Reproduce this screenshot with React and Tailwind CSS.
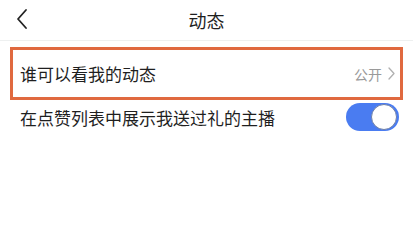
import React from 'react';

export default function App() {
  const font = { fontFamily: '"Noto Sans CJK SC", "Noto Sans", sans-serif' };
  return (
    <div className="w-[413px] h-[243px] bg-white overflow-hidden text-[#1f1f1f]" style={font}>
      {/* 顶部导航 */}
      <div className="relative h-[41px] flex items-center justify-center border-b border-[#eef0f0]">
        <svg className="absolute left-[15px] top-[8px]" width="14" height="22" viewBox="0 0 14 22">
          <path d="M11 2 L3 11 L11 20" fill="none" stroke="#222" strokeWidth="1.8" strokeLinecap="round" strokeLinejoin="round" />
        </svg>
        <span className="text-[18px] leading-none">动态</span>
      </div>

      {/* 谁可以看我的动态 */}
      <div className="mx-[10px] mt-[6px] h-[53px] border-[3px] border-[#e0693f] flex items-center justify-between pl-[7px] pr-[5px]">
        <span className="text-[17px] leading-none">谁可以看我的动态</span>
        <div className="flex items-center gap-[6px] text-[#9a9a9a]">
          <span className="text-[14px] leading-none">公开</span>
          <svg width="7" height="13" viewBox="0 0 7 13">
            <path d="M1 1 L6 6.5 L1 12" fill="none" stroke="#b0b0b0" strokeWidth="1.3" strokeLinecap="round" strokeLinejoin="round" />
          </svg>
        </div>
      </div>

      {/* 在点赞列表中展示 */}
      <div className="flex items-center justify-between pl-[20px] pr-[14px] h-[34px]">
        <span className="text-[17px] leading-none">在点赞列表中展示我送过礼的主播</span>
        <div className="w-[53px] h-[28px] rounded-full bg-[#4a7cf1] flex items-center justify-end p-[2px]">
          <div className="w-[26px] h-[26px] rounded-full bg-white border border-[#6d7fa8]" />
        </div>
      </div>
    </div>
  );
}
